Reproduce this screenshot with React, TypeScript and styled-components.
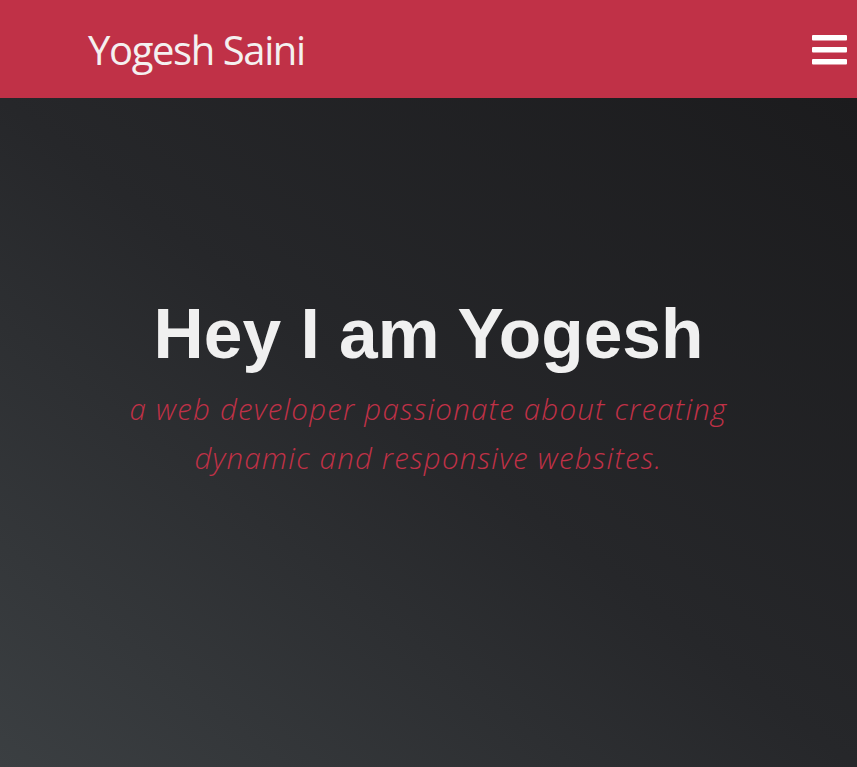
import React from "react";
import styled, { createGlobalStyle } from "styled-components";

const Global = createGlobalStyle`
  html, body { margin: 0; padding: 0; }
  body { background: #1c1c1e; }
  * { box-sizing: border-box; }
`;

const Page = styled.div`
  width: 857px;
  height: 767px;
  display: flex;
  flex-direction: column;
  overflow: hidden;
`;

const Navbar = styled.header`
  height: 98px;
  background: #c03147;
  display: flex;
  align-items: center;
  justify-content: space-between;
  padding: 0 10px 0 88px;
  flex-shrink: 0;
`;

const Brand = styled.div`
  font-family: "Open Sans", "Noto Sans", sans-serif;
  font-size: 40px;
  color: #f4f0f0;
  letter-spacing: -1.4px;
  line-height: 1;
  padding-top: 2px;
`;

const Burger = styled.button`
  background: none;
  border: 0;
  padding: 0;
  display: flex;
  cursor: pointer;
`;

const Hero = styled.main`
  flex: 1;
  background: linear-gradient(to top right, #3b3f42 0%, #26272a 50%, #1b1b1d 100%);
  display: flex;
  flex-direction: column;
  align-items: center;
  padding-top: 196px;
`;

const Title = styled.h1`
  margin: 0;
  font-family: "Liberation Sans", Arial, sans-serif;
  font-weight: 700;
  font-size: 69.5px;
  line-height: 80px;
  color: #f0f0f0;
  text-align: center;
`;

const Subtitle = styled.p`
  margin: 10px 0 0;
  width: 660px;
  font-family: "Open Sans", "Noto Sans", sans-serif;
  font-style: italic;
  font-weight: 300;
  font-size: 29.5px;
  line-height: 49px;
  letter-spacing: 1.2px;
  color: #c03147;
  text-align: center;
`;

export default function App() {
  return (
    <Page>
      <Global />
      <Navbar>
        <Brand>Yogesh Saini</Brand>
        <Burger aria-label="menu">
          <svg width="35" height="31" viewBox="0 0 35 31">
            <rect x="0" y="1" width="35" height="5.5" rx="1" fill="#fff" />
            <rect x="0" y="13" width="35" height="5.5" rx="1" fill="#fff" />
            <rect x="0" y="25" width="35" height="5.5" rx="1" fill="#fff" />
          </svg>
        </Burger>
      </Navbar>
      <Hero>
        <Title>Hey I am Yogesh</Title>
        <Subtitle>
          a web developer passionate about creating dynamic and responsive websites.
        </Subtitle>
      </Hero>
    </Page>
  );
}
